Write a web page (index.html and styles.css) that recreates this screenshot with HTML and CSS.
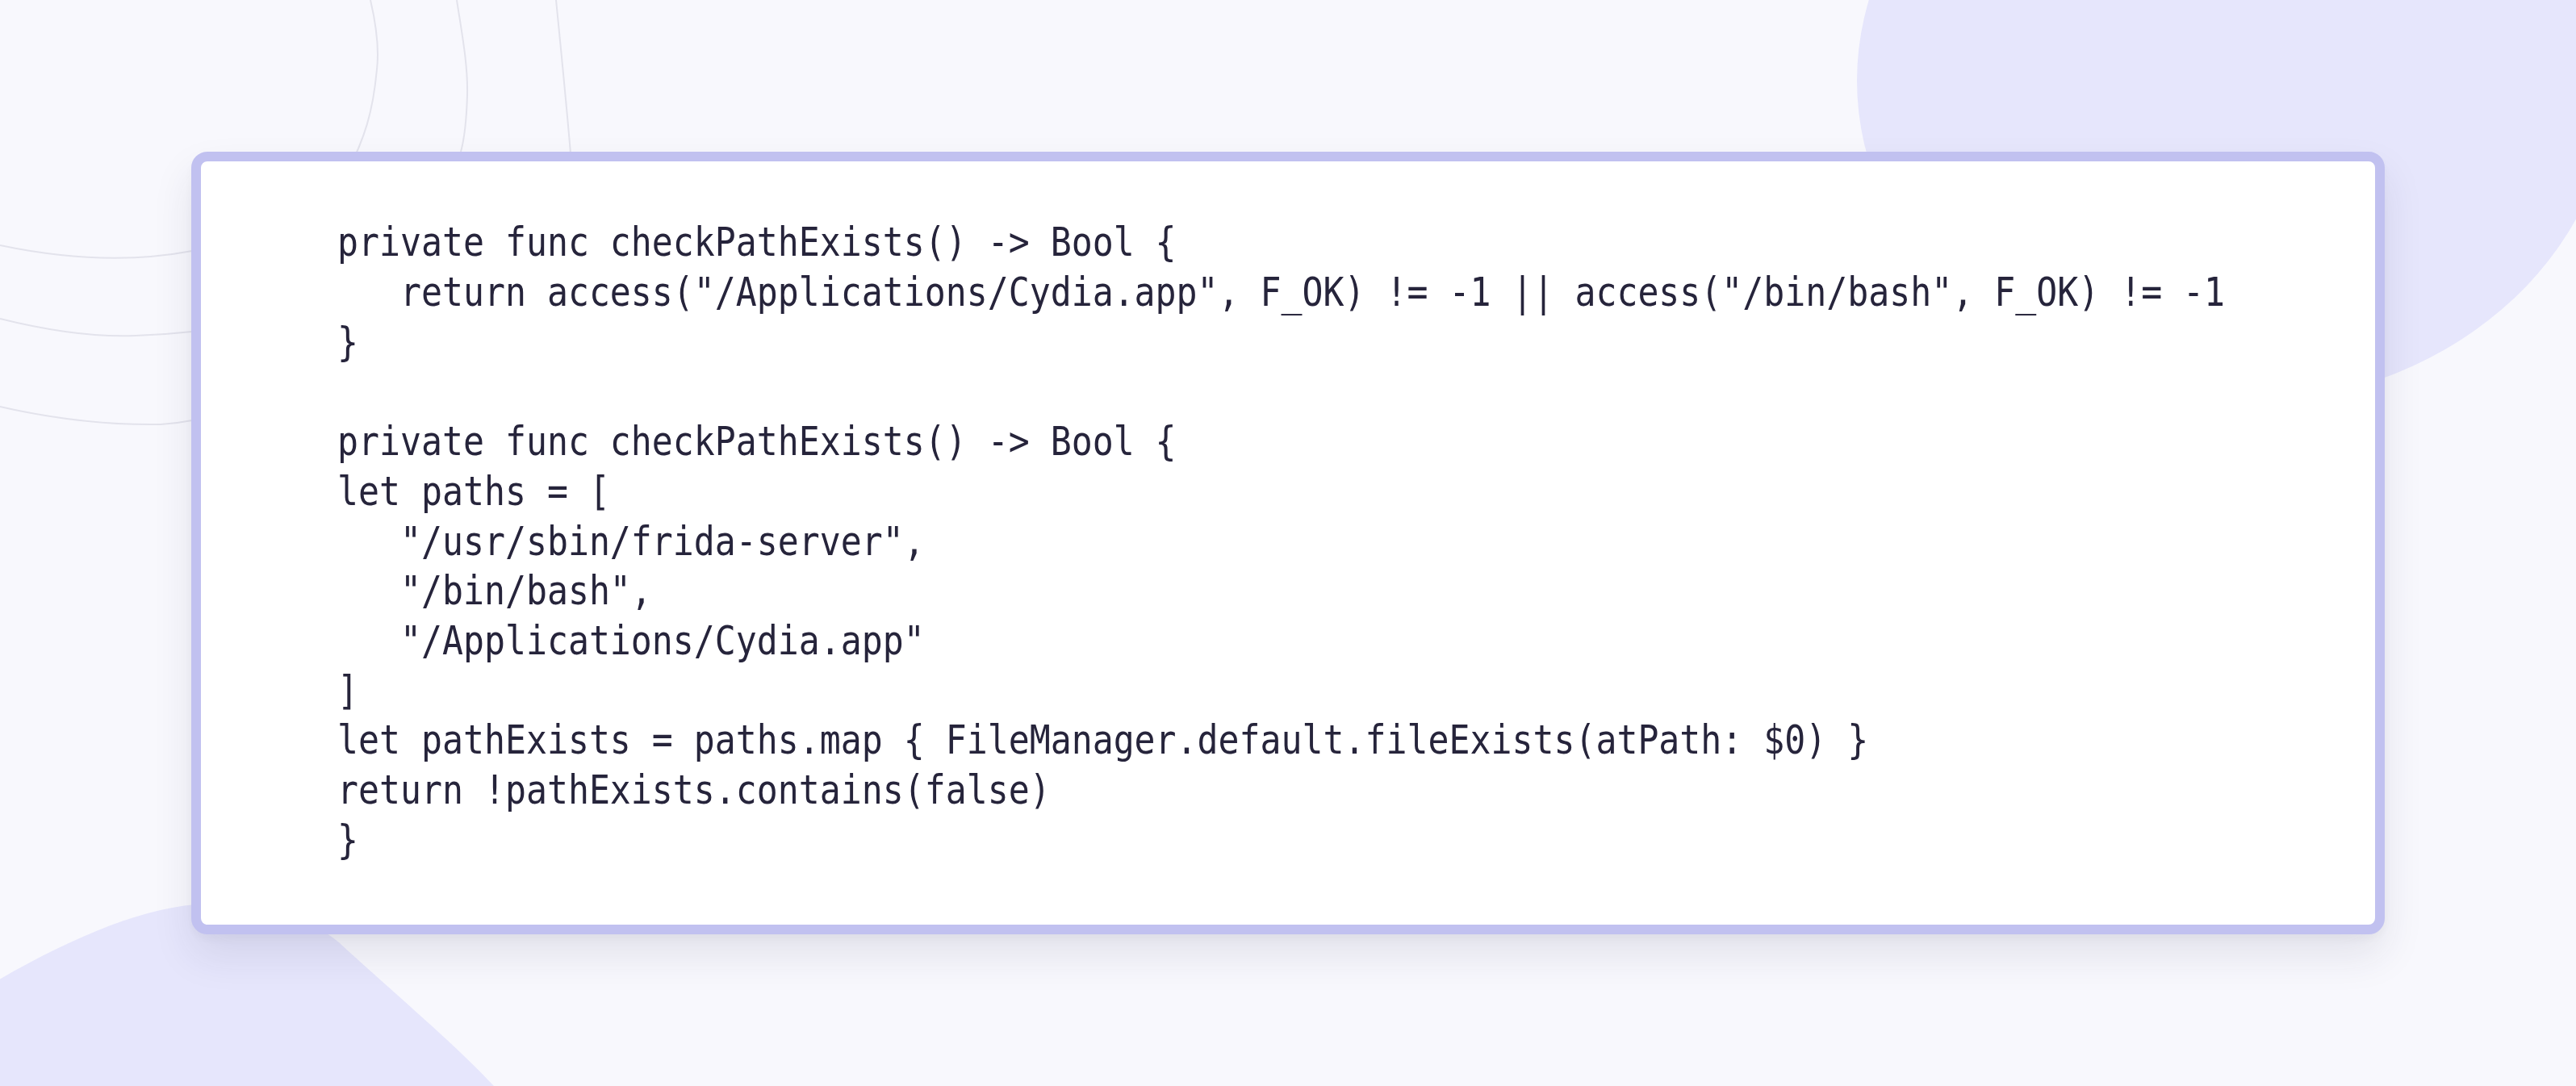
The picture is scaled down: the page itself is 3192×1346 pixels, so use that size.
FILE: index.html
```html
<!DOCTYPE html>
<html lang="en">
<head>
<meta charset="utf-8">
<title>Code snippet</title>
<link rel="stylesheet" href="styles.css">
</head>
<body>
<svg class="backdrop" viewBox="0 0 3192 1346" preserveAspectRatio="none" aria-hidden="true">
  <ellipse class="blob" cx="2769" cy="100" rx="468" ry="401"/>
  <path class="blob" d="M -20 1225 C 90 1160 190 1118 270 1120 C 330 1122 380 1135 420 1168 C 470 1215 560 1290 612 1346 L -20 1346 Z"/>
  <path class="contour" d="M 459 0 C 466 30 470 60 467 86 C 462 140 452 170 430 215 C 390 290 320 318 238 311 C 180 322 100 325 0 304"/>
  <path class="contour" d="M 566 0 C 572 40 580 80 579 118 C 578 150 576 170 571 188"/>
  <path class="contour" d="M 0 395 C 60 410 120 418 168 416 C 200 415 220 413 238 411"/>
  <path class="contour" d="M 689 0 C 695 60 702 130 707 190"/>
  <path class="contour" d="M 0 504 C 70 520 140 527 199 526 C 215 525 228 523 238 521"/>
</svg>
<main class="stage">
  <div class="card">
<pre class="code">private func checkPathExists() -&gt; Bool {
   return access("/Applications/Cydia.app", F_OK) != -1 || access("/bin/bash", F_OK) != -1
}

private func checkPathExists() -&gt; Bool {
let paths = [
   "/usr/sbin/frida-server",
   "/bin/bash",
   "/Applications/Cydia.app"
]
let pathExists = paths.map { FileManager.default.fileExists(atPath: $0) }
return !pathExists.contains(false)
}</pre>
  </div>
</main>
</body>
</html>
```

FILE: styles.css
```css
html, body {
  margin: 0;
  padding: 0;
}

body {
  background: #f8f8fd;
  width: 100vw;
  height: 100vh;
  overflow: hidden;
  font-family: "DejaVu Sans Mono", "Liberation Mono", monospace;
}

.backdrop {
  position: fixed;
  inset: 0;
  width: 100%;
  height: 100%;
  z-index: 0;
}

.blob {
  fill: #e6e6fc;
}

.contour {
  fill: none;
  stroke: #e3e3ec;
  stroke-width: 2;
}

.stage {
  position: relative;
  z-index: 1;
  height: 100%;
  display: flex;
  align-items: center;
  justify-content: center;
}

.card {
  box-sizing: border-box;
  width: 2718px;
  padding: 70px 0 73px 169px;
  background: #ffffff;
  border: 12px solid #c1c1f0;
  border-radius: 20px;
  box-shadow: 0 26px 50px rgba(40, 36, 80, 0.10), 0 6px 14px rgba(40, 36, 80, 0.04);
}

.code {
  margin: 0;
  font-family: "DejaVu Sans Mono", "Liberation Mono", monospace;
  font-size: 49px;
  line-height: 61.7px;
  color: #26243b;
  transform: scaleX(0.881);
  transform-origin: 0 0;
  white-space: pre;
}
```
